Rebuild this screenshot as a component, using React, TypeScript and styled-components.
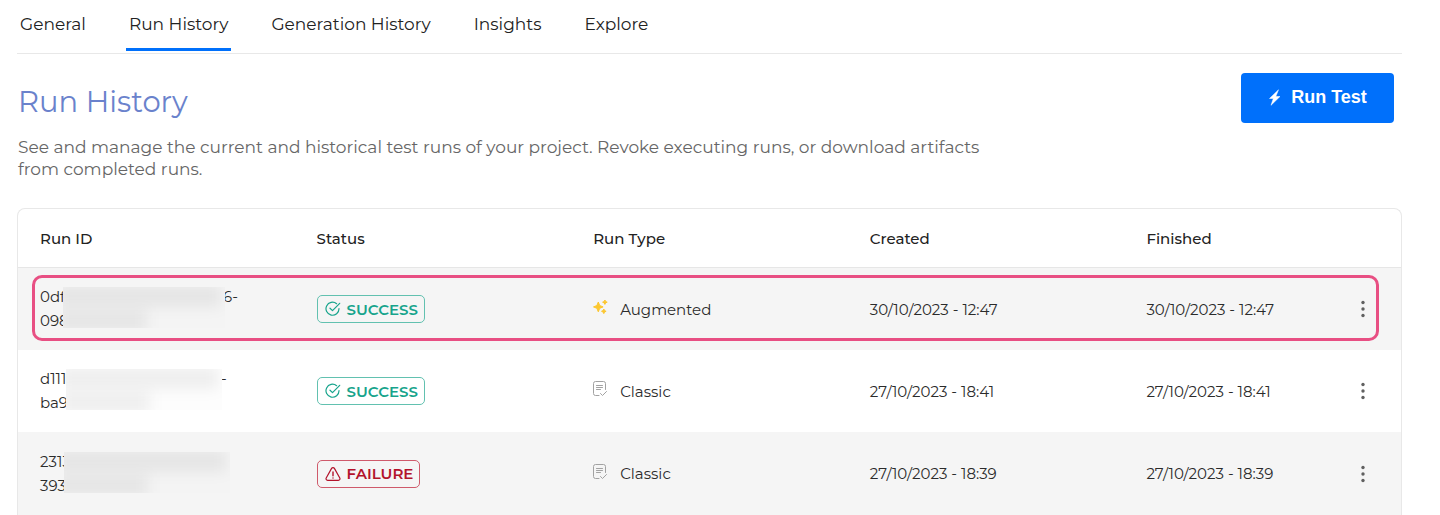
import React from "react";
import styled, { createGlobalStyle } from "styled-components";

const GlobalStyle = createGlobalStyle`
  *, *::before, *::after { box-sizing: border-box; }
  html { overflow: hidden; }
  body {
    margin: 0;
    background: #fff;
    color: #2b2b2b;
    font-family: Montserrat, Inter, "Open Sans", sans-serif;
    font-size: 15px;
  }
`;

const Page = styled.div`
  padding: 0 38px 0 17px;
`;

const Tabs = styled.nav`
  display: flex;
  gap: 37px;
  height: 54px;
  border-bottom: 1px solid #e8e8e8;
`;

const Tab = styled.a<{ $active?: boolean }>`
  height: 51px;
  padding: 0 3px;
  border-bottom: 3px solid ${(p) => (p.$active ? "#0070fb" : "transparent")};
  color: #222;
  font-size: 17px;
  line-height: 48px;
  text-decoration: none;
  white-space: nowrap;
`;

const Header = styled.header`
  display: flex;
  justify-content: space-between;
  align-items: flex-start;
  padding: 19px 8px 28px 1px;
`;

const Title = styled.h1`
  margin: 9px 0 14px;
  color: #6a82cc;
  font-size: 29px;
  font-weight: 400;
  line-height: 40px;
`;

const Intro = styled.p`
  max-width: 980px;
  margin: 0;
  color: #666;
  font-size: 17px;
  line-height: 22px;
`;

const RunButton = styled.button`
  display: flex;
  align-items: center;
  justify-content: center;
  gap: 9px;
  flex: none;
  width: 153px;
  height: 50px;
  padding: 0 0 2px;
  border: 0;
  border-radius: 4px;
  background: #0070fb;
  color: #fff;
  font: bold 18px "Liberation Sans", Arial, sans-serif;
`;

const Panel = styled.div`
  border: 1px solid #e8e8e8;
  border-bottom: 0;
  border-radius: 8px 8px 0 0;
  overflow: hidden;
`;

const Table = styled.table`
  width: 100%;
  table-layout: fixed;
  border-collapse: separate;
  border-spacing: 0;
`;

const HeadCell = styled.th`
  width: 20%;
  height: 59px;
  padding: 0 0 0 22px;
  border-bottom: 1px solid #e6e6e6;
  color: #222;
  font-weight: 500;
  text-align: left;
`;

const MenuHead = styled(HeadCell)`
  width: 78px;
`;

const LastDataHead = styled(HeadCell)`
  width: auto;
`;

const Row = styled.tr`
  position: relative;
  height: 82px;
  &:nth-child(odd) { background: #f5f5f5; }
  &:last-child { height: 83px; }
`;

const Cell = styled.td`
  padding: 0 0 0 22px;
  white-space: nowrap;
`;

const MenuCell = styled.td`
  padding: 0 28px 0 0;
`;

const Highlight = styled.div`
  position: absolute;
  inset: 7px 22px 9px 14px;
  border: 3px solid #e84f83;
  border-radius: 10px;
  pointer-events: none;
`;

const RunId = styled.div`
  position: relative;
  line-height: 24px;
`;

const IdLine = styled.div<{ $hidden: number }>`
  display: grid;
  grid-template-columns: ${(p) => p.$hidden}px auto;
`;

const Redaction = styled.span<{ $left: number; $width: number; $base: string }>`
  position: absolute;
  top: 2px;
  left: ${(p) => p.$left}px;
  width: ${(p) => p.$width}px;
  height: 41px;
  overflow: hidden;
  background: ${(p) => p.$base};

  &::before, &::after {
    content: "";
    position: absolute;
    left: -6px;
    background: rgba(0, 0, 0, 0.06);
    filter: blur(7px);
  }
  &::before { top: -2px; right: 4px; height: 22px; }
  &::after { top: 24px; width: 90px; height: 20px; }
`;

const Badge = styled.span<{ $failed?: boolean }>`
  display: inline-flex;
  align-items: center;
  gap: 6px;
  height: 28px;
  padding: 0 6px 0 7px;
  border: 1px solid ${(p) => (p.$failed ? "#cf5a6b" : "#62c1b0")};
  border-radius: 5px;
  color: ${(p) => (p.$failed ? "#b3132b" : "#17a48c")};
  font-weight: 600;
  vertical-align: middle;
`;

const RunType = styled.div`
  display: flex;
  align-items: center;
  gap: 12px;

  svg { margin-bottom: 4px; }
`;

const MenuButton = styled.button`
  display: flex;
  align-items: center;
  justify-content: center;
  width: 20px;
  height: 24px;
  margin-left: auto;
  padding: 0;
  border: 0;
  background: none;
  color: #606060;
`;

const Bolt = () => (
  <svg width="14" height="18" viewBox="0 0 14 18" fill="currentColor" aria-hidden="true">
    <path d="M10.5 1.8 1.5 10.5H5.3L3 17.3 12 8.5H7.8z" stroke="currentColor" strokeWidth=".5" strokeLinejoin="round" />
  </svg>
);

const Check = () => (
  <svg width="16" height="16" viewBox="0 0 16 16" fill="none" stroke="currentColor" strokeWidth="1.2" strokeLinecap="round" strokeLinejoin="round" aria-hidden="true">
    <path d="M11.6 2.7A6.5 6.5 0 1 0 14 7.6" />
    <path d="M5 7.2 7.5 9.6 14.7 2.3" />
  </svg>
);

const Warning = () => (
  <svg width="16" height="16" viewBox="0 0 16 16" fill="none" stroke="currentColor" strokeWidth="1.2" strokeLinecap="round" strokeLinejoin="round" aria-hidden="true">
    <path d="M6.6 2.4 1.2 12c-.6 1.1.1 2.3 1.4 2.3h10.8c1.3 0 2-1.2 1.4-2.3L9.4 2.4c-.6-1.1-2.2-1.1-2.8 0z" />
    <path d="M8 6v3.8M8 11.9v.1" strokeWidth="1.4" />
  </svg>
);

const Sparkles = () => (
  <svg width="15" height="16" viewBox="0 0 15 16" fill="#fcc72f" stroke="#fcc72f" strokeWidth="1" strokeLinejoin="round" aria-hidden="true">
    <path d="M5.3 3 6.7 6.5 10.1 7.9 6.7 9.3 5.3 12.8 3.9 9.3.5 7.9 3.9 6.5z" />
    <path d="M11.9 1 12.6 2.5 14.2 3.2 12.6 3.9 11.9 5.4 11.2 3.9 9.6 3.2 11.2 2.5zM10.8 10 11.5 11.6 13.1 12.3 11.5 13 10.8 14.6 10.1 13 8.5 12.3 10.1 11.6z" />
  </svg>
);

const Script = () => (
  <svg width="15" height="16" viewBox="0 0 15 16" fill="none" stroke="#a2a2a2" strokeLinecap="round" strokeLinejoin="round" aria-hidden="true">
    <path d="M12.5 8.5V2.5a2 2 0 0 0-2-2H2.5a2 2 0 0 0-2 2V12.5a2 2 0 0 0 2 2H6M3.5 4.5h6M3.5 6.5h6M3.5 8.5h4M7.5 12.5 9.5 14.5 13.5 10.5" />
  </svg>
);

const Dots = () => (
  <svg width="6" height="18" viewBox="0 0 6 18" fill="currentColor" aria-hidden="true">
    <circle cx="3" cy="2.5" r="1.7" />
    <circle cx="3" cy="9" r="1.7" />
    <circle cx="3" cy="15.5" r="1.7" />
  </svg>
);

type Run = {
  start: string;
  next: string;
  end: string;
  endAt: number;
  hide: [number, number];
  failed?: boolean;
  augmented?: boolean;
  created: string;
  finished: string;
};

const runs: Run[] = [
  { start: "0df", next: "098", end: "6-", endAt: 183, hide: [23, 162], augmented: true, created: "30/10/2023 - 12:47", finished: "30/10/2023 - 12:47" },
  { start: "d111", next: "ba9", end: "-", endAt: 181, hide: [26, 156], created: "27/10/2023 - 18:41", finished: "27/10/2023 - 18:41" },
  { start: "2313", next: "393", end: "", endAt: 181, hide: [24, 166], failed: true, created: "27/10/2023 - 18:39", finished: "27/10/2023 - 18:39" },
];

const tabs = ["General", "Run History", "Generation History", "Insights", "Explore"];

export default function App() {
  return (
    <>
      <GlobalStyle />
      <Page>
        <Tabs>
          {tabs.map((name) => (
            <Tab key={name} href="#" $active={name === "Run History"}>{name}</Tab>
          ))}
        </Tabs>
        <Header>
          <div>
            <Title>Run History</Title>
            <Intro>
              See and manage the current and historical test runs of your project. Revoke executing runs, or download artifacts from completed runs.
            </Intro>
          </div>
          <RunButton><Bolt />Run Test</RunButton>
        </Header>
        <Panel>
          <Table>
            <thead>
              <tr>
                <HeadCell>Run ID</HeadCell>
                <HeadCell>Status</HeadCell>
                <HeadCell>Run Type</HeadCell>
                <HeadCell>Created</HeadCell>
                <LastDataHead>Finished</LastDataHead>
                <MenuHead />
              </tr>
            </thead>
            <tbody>
              {runs.map((run) => (
                <Row key={run.start}>
                  <Cell>
                    <RunId>
                      <IdLine $hidden={run.endAt}><span>{run.start}</span><span>{run.end}</span></IdLine>
                      <div>{run.next}</div>
                      <Redaction $left={run.hide[0]} $width={run.hide[1]} $base={run.start === "d111" ? "#fdfdfd" : "#f4f4f4"} />
                    </RunId>
                    {run.augmented && <Highlight />}
                  </Cell>
                  <Cell>
                    <Badge $failed={run.failed}>
                      {run.failed ? <Warning /> : <Check />}
                      {run.failed ? "FAILURE" : "SUCCESS"}
                    </Badge>
                  </Cell>
                  <Cell>
                    <RunType>
                      {run.augmented ? <Sparkles /> : <Script />}
                      {run.augmented ? "Augmented" : "Classic"}
                    </RunType>
                  </Cell>
                  <Cell>{run.created}</Cell>
                  <Cell>{run.finished}</Cell>
                  <MenuCell><MenuButton aria-label="Run actions"><Dots /></MenuButton></MenuCell>
                </Row>
              ))}
            </tbody>
          </Table>
        </Panel>
      </Page>
    </>
  );
}
